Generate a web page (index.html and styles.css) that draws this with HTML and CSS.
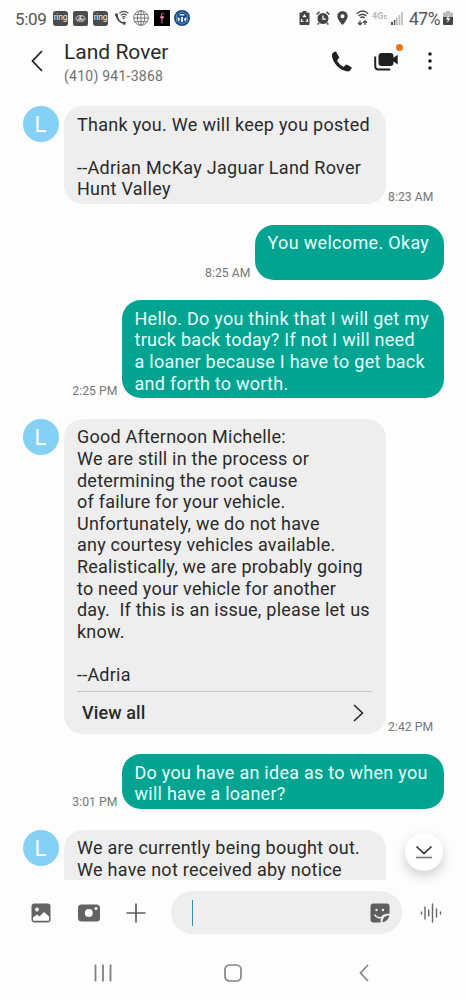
FILE: index.html
```html
<!DOCTYPE html>
<html lang="en">
<head>
<meta charset="utf-8">
<title>Land Rover</title>
<link rel="stylesheet" href="styles.css">
</head>
<body>
<div class="phone">
  <div class="status">
    <span class="clock">5:09</span>
    <span class="ring">ring</span>
    <svg class="app" width="15" height="15" viewBox="0 0 15 15"><rect width="15" height="15" rx="2" fill="#4b4b4b"/><g fill="none" stroke="#ddd" stroke-width="1"><ellipse cx="7.5" cy="7.5" rx="4.5" ry="2.8"/><path d="M4.5 9.5 8 4.5 7.3 8h3.5M5 8.7h5"/></g></svg>
    <span class="ring">ring</span>
    <svg class="wcall" width="14" height="14" viewBox="0 0 14 14" fill="none" stroke="#4a4a4a"><path d="M1.5 3.5C1.6 8 5 12 9.5 12.4" stroke-width="1.8"/><path d="M1.5 2.6v2.6M8 12l2.6.4" stroke-width="2.8"/><path d="M4.2 2.4c2.8-2.4 6.5-2.4 9.2 0M5.8 4.4c1.8-1.5 4.3-1.5 6 0M7.3 6.2c1-.8 2-.8 3 0" stroke-width="1.1"/><circle cx="8.8" cy="7.6" r=".8" fill="#4a4a4a" stroke="none"/></svg>
    <svg class="globe" width="16" height="16" viewBox="0 0 16 16" fill="none" stroke="#777" stroke-width="1"><circle cx="8" cy="8" r="7.3"/><ellipse cx="8" cy="8" rx="3.6" ry="7.3"/><path d="M8 .7v14.6M.7 8h14.6M1.7 4.4h12.6M1.7 11.6h12.6"/></svg>
    <svg class="flam" width="16" height="16" viewBox="0 0 16 16"><path fill="#000" d="M0 0h16v16H0z"/><path d="M10 4.500C9.300 2.300 7 3 7.500 5l.8 2M8 8v5.500" fill="none" stroke="#e87ba0" stroke-width="1"/><ellipse cx="8" cy="7.300" rx="1.900" ry="1.300" fill="#ef83a6"/></svg>
    <svg class="blue" width="16" height="16" viewBox="0 0 16 16"><circle cx="8" cy="8" r="8" fill="#154a8b"/><path d="m8 1.700 5.500 3.200v6.200L8 14.300l-5.500-3.200V4.900z" fill="none" stroke="#7fa6d2" stroke-width=".7"/><path d="M6 3.900h4l.6 1.700H5.400zM3.800 7l2.100 1.500-.4 2.400-.9.300-1.100-2zM12.200 7l-2.100 1.500.4 2.400.9.300 1.100-2zM6.800 7.100h2.400L8.800 9l.5 2.200L8 12.600l-1.300-1.400L7.200 9z" fill="#e8f2fc"/></svg>
    <span class="spacer"></span>
    <svg width="11" height="14" viewBox="0 0 11 14"><path d="M3.500 0h4v1.500h2q1 0 1 1V13q0 1-1 1h-8q-1 0-1-1V2.500q0-1 1-1h2z" fill="#444"/><path d="m4 6.300 1.500-2.200L7 6.300M8 8l.8 2.200H6.500M3 8l-.8 2.200h2.500" fill="none" stroke="#fff" stroke-width="1.100"/></svg>
    <svg class="alarm" width="14" height="14" viewBox="0 0 14 14"><circle cx="7" cy="7.500" r="5.500" fill="#444"/><path d="M.6 3.500 3.500.8M13.400 3.500 10.500.8M3 12l-1.400 1.600M11 12l1.400 1.600" stroke="#444" stroke-width="1.500"/><path d="M7 4.500v3.600h2.800" fill="none" stroke="#fff" stroke-width="1.200"/></svg>
    <svg class="pin" width="11" height="14" viewBox="0 0 11 14"><path fill="#444" fill-rule="evenodd" d="M5.500 0A5.200 5.200 0 0 0 .3 5.200C.3 8.500 5.500 14 5.500 14s5.200-5.500 5.200-8.800A5.200 5.200 0 0 0 5.500 0zm0 3.300a2 2 0 1 1 0 4 2 2 0 0 1 0-4z"/></svg>
    <svg class="wifi" width="13" height="16" viewBox="0 0 13 16" fill="none" stroke="#4c4c4c"><path d="M.8 3.800c3.600-3.400 7.800-3.400 11.400 0M2.600 6c2.600-2.300 5.200-2.300 7.800 0M4.400 7.900c1.500-1.200 2.700-1.200 4.200 0" stroke-width="1.400"/><path d="M4 10.500v4M2 12.800l2 2 2-2M9 15v-4M7 12.800l2-2 2 2" stroke-width="1.300"/></svg>
    <span class="lte">4G<i>E</i></span>
    <svg class="sig" width="12" height="13" viewBox="0 0 12 13"><path fill="#555" d="M0 10h2v3H0zM2.800 8h1.500v5H2.800z"/><path fill="#bdbdbd" d="M5 5.500h1.700V13H5zM7.600 3h1.700v10H7.600zM10.200 0h1.700v13h-1.700z"/></svg>
    <span class="pct">47%</span>
    <svg class="bat" width="10" height="14" viewBox="0 0 10 14"><path fill="#bbb" d="M3 0h4v1.500h3V6H0V1.500h3z"/><path fill="#444" d="M0 6h10v7q0 1-1 1H1q-1 0-1-1z"/><path fill="#fff" d="M6 4 2.800 8.500h2L4.300 12l3-4.700H5.300z"/></svg>
  </div>

  <header class="header">
    <svg class="back" width="12" height="22" viewBox="0 0 12 22"><path d="M11 1 1.500 11 11 21" fill="none" stroke="#222" stroke-width="1.800"/></svg>
    <div class="contact"><div class="name">Land Rover</div><div class="number">(410) 941-3868</div></div>
    <svg class="call" width="21" height="21" viewBox="0 0 21 21"><path fill="#202020" d="M3.800.7C1.500 1.500.7 3.200 1 5.200 2.200 12.400 8.500 18.900 15.600 20.300c2.200.4 3.800-.5 4.900-2.800.3-.6.1-1.100-.4-1.400l-4-2.300c-.5-.3-1.100-.2-1.500.2l-1.500 1.500c-.4.4-.9.4-1.300.1-2-1.200-4.300-3.600-5.500-5.700-.2-.4-.2-.9.200-1.200L7.800 7.300c.4-.4.5-.9.200-1.400L5.300 1.200C5 .7 4.400.5 3.800.7z"/></svg>
    <span class="video"><svg width="25" height="19" viewBox="0 0 25 19"><rect x="4.500" y="1" width="15" height="13" rx="3.200" fill="#202020"/><path d="m18.500 6.500 5.200-3.700v9.600l-5.200-3.600z" fill="#202020"/><path d="M1.200 4.500V14q0 3.500 3.500 3.500h11.500" fill="none" stroke="#202020" stroke-width="2"/></svg><i class="badge"></i></span>
    <svg class="more" width="4" height="18" viewBox="0 0 4 18" fill="#202020"><circle cx="2" cy="2" r="1.800"/><circle cx="2" cy="9" r="1.800"/><circle cx="2" cy="16" r="1.800"/></svg>
  </header>

  <main class="chat">
    <div class="row in"><span class="avatar">L</span><div class="bubble">Thank you. We will keep you posted<br><br>--Adrian McKay Jaguar Land Rover<br>Hunt Valley</div><time>8:23 AM</time></div>
    <div class="row out"><time>8:25 AM</time><div class="bubble short">You welcome. Okay<br><br></div></div>
    <div class="row out"><time>2:25 PM</time><div class="bubble">Hello. Do you think that I will get my<br>truck back today? If not I will need<br>a loaner because I have to get back<br>and forth to worth.</div></div>
    <div class="row in"><span class="avatar">L</span><div class="bubble long">Good Afternoon Michelle:<br>We are still in the process or<br>determining the root cause<br>of failure for your vehicle.<br>Unfortunately, we do not have<br>any courtesy vehicles available.<br>Realistically, we are probably going<br>to need your vehicle for another<br>day.&nbsp; If this is an issue, please let us<br>know.<br><br>--Adria
      <div class="viewall"><span>View all</span><svg width="11" height="18" viewBox="0 0 11 18"><path d="m1 1 8.500 8L1 17" fill="none" stroke="#222" stroke-width="1.500"/></svg></div></div><time>2:42 PM</time></div>
    <div class="row out"><time>3:01 PM</time><div class="bubble">Do you have an idea as to when you<br>will have a loaner?</div></div>
    <div class="row in"><span class="avatar">L</span><div class="bubble">We are currently being bought out.<br>We have not received aby notice<br><br></div></div>
  </main>
  <div class="jump"><svg width="18" height="14" viewBox="0 0 18 14" fill="none"><path d="m1.500 1.500 7.500 7 7.500-7" stroke="#333" stroke-width="1.700"/><path d="M1 12.500h16" stroke="#777" stroke-width="1.600"/></svg></div>

  <div class="composer">
    <svg width="20" height="20" viewBox="0 0 20 20"><rect x=".5" y=".5" width="19" height="19" rx="3" fill="#636363"/><circle cx="6" cy="6.500" r="1.900" fill="#fff"/><path d="M2 14.500 6 11.500l2.500 2 4.500-4.500 5 4.500V17q0 .8-.8.800H2.800q-.8 0-.8-.8z" fill="#fff"/></svg>
    <svg class="cam" width="22" height="18" viewBox="0 0 22 18"><rect x="0" y=".5" width="22" height="17" rx="3.500" fill="#636363"/><circle cx="10.800" cy="9" r="4" fill="#fff"/><circle cx="18" cy="4.500" r="1.500" fill="#fff"/></svg>
    <svg class="plus" width="20" height="20" viewBox="0 0 20 20"><path d="M10 .5v19M.5 10h19" stroke="#5c5c5c" stroke-width="1.700"/></svg>
    <div class="field"><span class="caret"></span><svg width="20" height="20" viewBox="0 0 20 20"><path fill="#5f5f5f" d="M3.500.5h13q3 0 3 3v7.200h-2.300c-4 0-6.500 2.800-6.500 6.500v2.300H3.500q-3 0-3-3v-13q0-3 3-3z"/><path fill="#5f5f5f" d="M19.300 12.500c-.5 3.500-3.300 6.300-6.800 6.800.1-4.300 2.500-6.800 6.800-6.800z"/><circle cx="6.500" cy="7" r="1.200" fill="#eee"/><circle cx="13" cy="7" r="1.200" fill="#eee"/><path d="M4.500 11.500c1.800 3.600 6 4.300 9 1.500" fill="none" stroke="#eee" stroke-width="1.600"/></svg></div>
    <svg class="wave" width="22" height="20" viewBox="0 0 22 20" stroke="#666" stroke-width="1.400" stroke-linecap="round"><path d="M1.500 9v2M5 4v12M8.700 7v6M12.500 1v18M16.500 6v8M20.500 9v2"/></svg>
  </div>
  <nav class="nav">
    <svg width="18" height="18" viewBox="0 0 18 18" stroke="#808080" stroke-width="1.800"><path d="M1.500.5v17M9 .5v17M16.500.5v17"/></svg>
    <svg class="home" width="18" height="18" viewBox="0 0 18 18"><rect x="1" y="1" width="16" height="16" rx="4.500" fill="none" stroke="#858585" stroke-width="1.700"/></svg>
    <svg class="navback" width="10" height="18" viewBox="0 0 10 18"><path d="M9 1 1.500 9 9 17" fill="none" stroke="#858585" stroke-width="1.700"/></svg>
  </nav>
</div>
</body>
</html>
```

FILE: styles.css
```css
* { box-sizing: border-box; }
body { margin: 0; background: #fdfdfd; font-family: Roboto, "Liberation Sans", sans-serif; color: #2a2a2a; }
svg { display: block; flex: none; }
.phone { width: 466px; height: 1000px; display: flex; flex-direction: column; position: relative; overflow: hidden; }

.status { height: 36px; flex: none; display: flex; align-items: center; padding: 0 13px 0 15px; color: #555; }
.clock { font-size: 17px; width: 38px; letter-spacing: -.3px; line-height: 36px; padding-top: 2px; }
.ring { width: 15px; height: 15px; border-radius: 3px; background: #4b4b4b; color: #eee; font-size: 8.5px; line-height: 13px; text-align: center; letter-spacing: -.2px; }
.app { margin: 0 5px; }
.wcall { margin-left: 7px; }
.globe { margin-left: 4px; }
.flam { margin-left: 5px; }
.blue { margin-left: 4px; }
.spacer { flex: 1; }
.alarm { margin-left: 6px; }
.pin { margin-left: 7px; }
.wifi { margin-left: 8px; }
.lte { width: 17px; margin-left: 3px; font-size: 9px; line-height: 10px; font-weight: 700; color: #b8b8b8; height: 15px; letter-spacing: .2px; white-space: nowrap; }
.lte i { font-size: 6px; font-style: normal; }
.sig { margin-left: 2px; }
.pct { width: 33px; margin-left: 6px; font-size: 17.5px; letter-spacing: -.5px; padding-top: 2px; }
.bat { margin-left: 1px; }

.header { height: 60px; flex: none; display: flex; align-items: center; padding: 0 34px 10px 31px; }
.contact { width: 267px; margin-left: 21px; padding-top: 3px; }
.name { font-size: 21px; line-height: 26px; }
.number { font-size: 14px; line-height: 22px; color: #707070; letter-spacing: .25px; }
.video { position: relative; margin-left: 22px; }
.badge { position: absolute; left: 22px; top: -8px; width: 7px; height: 7px; border-radius: 50%; background: #e57818; }
.more { margin-left: auto; }

.chat { height: 784px; flex: none; overflow: hidden; padding: 10px 22.5px 0; display: flex; flex-direction: column; gap: 20.5px; }
.row { display: flex; flex: none; align-items: flex-end; }
.out { justify-content: flex-end; }
.avatar { width: 36px; height: 36px; margin-right: 5.5px; align-self: flex-start; border-radius: 50%; background: #85d0f5; color: #fff; font-size: 22px; line-height: 37px; text-align: center; }
.bubble { width: 322px; border-radius: 19px; padding: 7.6px 13px 4.2px; font-size: 18px; line-height: 21.6px; letter-spacing: .28px; white-space: nowrap; }
.in .bubble { background: #eee; }
.out .bubble { background: #01a391; color: #e6fffb; letter-spacing: .26px; }
.out .short { width: 189px; letter-spacing: .32px; }
time { font-size: 12.2px; line-height: 14px; color: #777; margin: 0 3px 0 2px; letter-spacing: .05px; }
.out time { margin: 0 4px 0 0; }
.viewall { display: flex; align-items: center; justify-content: space-between; height: 43.3px; margin-top: 5px; border-top: 1.5px solid #c4c4c4; padding: 1px 8px 0 5px; font-weight: 500; letter-spacing: .1px; }
.in .long { padding-right: 14px; padding-bottom: 0; letter-spacing: .22px; }
.jump { position: absolute; left: 405px; top: 833px; width: 38px; height: 38px; border-radius: 50%; background: #fff; box-shadow: 0 5px 12px rgba(0,0,0,.18); display: flex; align-items: center; justify-content: center; }

.composer { height: 65px; flex: none; display: flex; align-items: center; padding: 0 24px 0 31px; }
.cam { margin-left: 27px; }
.plus { margin-left: 26px; }
.field { width: 231px; height: 43px; margin-left: 25px; border-radius: 22px; background: #eee; display: flex; align-items: center; justify-content: space-between; padding: 0 12px 0 21px; }
.caret { width: 1px; height: 26px; background: #2a91b5; }
.wave { margin-left: auto; }
.nav { height: 55px; flex: none; display: flex; align-items: center; padding-left: 94px; }
.home { margin-left: 112px; }
.navback { margin-left: 117px; }
```
